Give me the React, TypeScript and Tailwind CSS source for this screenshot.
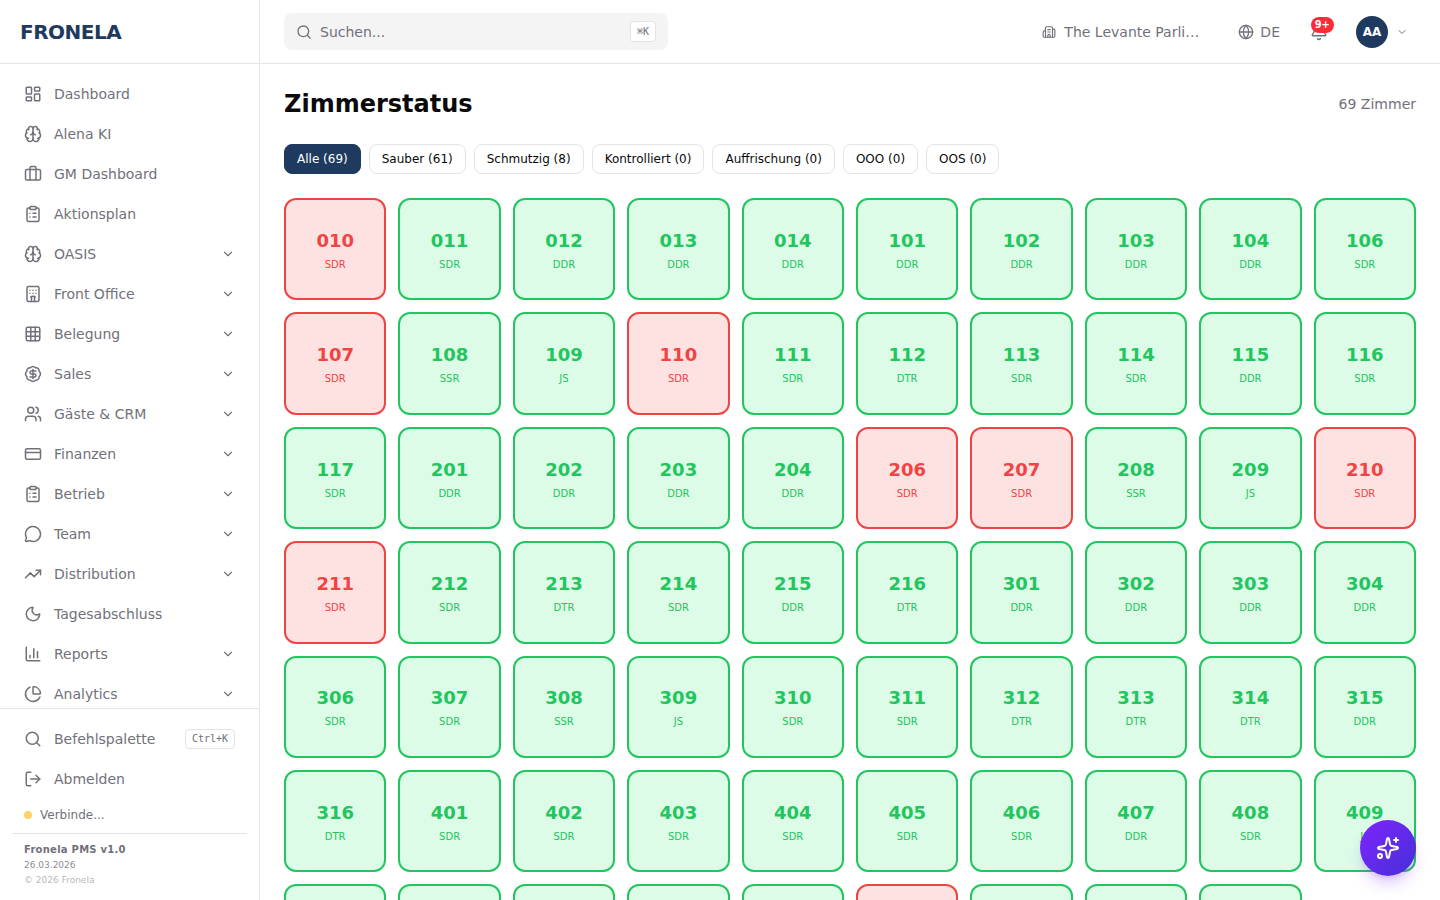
import { useState } from "react";
import {
  BadgeDollarSign,
  Bell,
  Brain,
  Briefcase,
  Building2,
  ChartColumn,
  ChartPie,
  ChevronDown,
  ClipboardList,
  CreditCard,
  Globe,
  Grid3x3,
  Hotel,
  LayoutDashboard,
  LogOut,
  LucideIcon,
  MessageCircle,
  Moon,
  Search,
  Sparkles,
  TrendingUp,
  Users,
} from "lucide-react";
import clsx from "clsx";

interface NavEntry {
  label: string;
  icon: LucideIcon;
  expandable?: boolean;
}

const NAV_ENTRIES: NavEntry[] = [
  { label: "Dashboard", icon: LayoutDashboard },
  { label: "Alena KI", icon: Brain },
  { label: "GM Dashboard", icon: Briefcase },
  { label: "Aktionsplan", icon: ClipboardList },
  { label: "OASIS", icon: Brain, expandable: true },
  { label: "Front Office", icon: Hotel, expandable: true },
  { label: "Belegung", icon: Grid3x3, expandable: true },
  { label: "Sales", icon: BadgeDollarSign, expandable: true },
  { label: "Gäste & CRM", icon: Users, expandable: true },
  { label: "Finanzen", icon: CreditCard, expandable: true },
  { label: "Betrieb", icon: ClipboardList, expandable: true },
  { label: "Team", icon: MessageCircle, expandable: true },
  { label: "Distribution", icon: TrendingUp, expandable: true },
  { label: "Tagesabschluss", icon: Moon },
  { label: "Reports", icon: ChartColumn, expandable: true },
  { label: "Analytics", icon: ChartPie, expandable: true },
];

// one string per row, "number type"
const ROOMS = [
  "010 SDR,011 SDR,012 DDR,013 DDR,014 DDR,101 DDR,102 DDR,103 DDR,104 DDR,106 SDR",
  "107 SDR,108 SSR,109 JS,110 SDR,111 SDR,112 DTR,113 SDR,114 SDR,115 DDR,116 SDR",
  "117 SDR,201 DDR,202 DDR,203 DDR,204 DDR,206 SDR,207 SDR,208 SSR,209 JS,210 SDR",
  "211 SDR,212 SDR,213 DTR,214 SDR,215 DDR,216 DTR,301 DDR,302 DDR,303 DDR,304 DDR",
  "306 SDR,307 SDR,308 SSR,309 JS,310 SDR,311 SDR,312 DTR,313 DTR,314 DTR,315 DDR",
  "316 DTR,401 SDR,402 SDR,403 SDR,404 SDR,405 SDR,406 SDR,407 DDR,408 SDR,409 JS",
  "410 SDR,411 SDR,412 DTR,413 DTR,414 DTR,415 DDR,416 DTR,501 SDR,502 SDR",
].flatMap((row) =>
  row.split(",").map((room) => {
    const [number, type] = room.split(" ");
    return { number, type };
  }),
);

const DIRTY = ["010", "107", "110", "206", "207", "210", "211", "415"];

const FILTERS = [
  { key: "all", label: "Alle", count: 69 },
  { key: "clean", label: "Sauber", count: 61 },
  { key: "dirty", label: "Schmutzig", count: 8 },
  { key: "inspected", label: "Kontrolliert", count: 0 },
  { key: "refresh", label: "Auffrischung", count: 0 },
  { key: "ooo", label: "OOO", count: 0 },
  { key: "oos", label: "OOS", count: 0 },
];

function NavLink({ label, icon: Icon, expandable }: NavEntry) {
  return (
    <a
      href="#"
      className="flex h-9 shrink-0 items-center gap-3 rounded-lg px-3 text-sm hover:bg-zinc-100"
    >
      <Icon size={18} />
      <span className="flex-1">{label}</span>
      {expandable && <ChevronDown size={14} />}
    </a>
  );
}

function Sidebar() {
  return (
    <aside className="flex w-[260px] shrink-0 flex-col border-r border-[#e4e4e7] text-[#71717a]">
      <div className="flex h-16 shrink-0 items-center border-b border-[#e4e4e7] px-5">
        <span className="text-xl font-bold tracking-tight text-[#1e3a5f]">
          FRONELA
        </span>
      </div>
      <nav className="flex min-h-0 flex-1 flex-col gap-1 overflow-y-auto p-3">
        {NAV_ENTRIES.map((entry) => (
          <NavLink key={entry.label} {...entry} />
        ))}
      </nav>
      <div className="flex shrink-0 flex-col gap-1 border-t border-[#e4e4e7] px-3 pt-3 pb-[13px]">
        <button
          type="button"
          className="flex h-9 items-center gap-3 rounded-lg px-3 text-sm hover:bg-zinc-100"
        >
          <Search size={18} />
          <span className="flex-1 text-left">Befehlspalette</span>
          <kbd className="rounded border border-[#e4e4e7] px-1.5 py-0.5 font-['DejaVu_Sans_Mono',monospace] text-[10px] leading-[14px]">
            Ctrl+K
          </kbd>
        </button>
        <button
          type="button"
          className="flex h-9 items-center gap-3 rounded-lg px-3 text-sm hover:bg-zinc-100"
        >
          <LogOut size={18} />
          Abmelden
        </button>
        <div className="flex items-center gap-2 px-3 py-1.5 text-xs">
          <span className="size-2 rounded-full bg-[#ffd166]" />
          Verbinde...
        </div>
        <div className="flex flex-col gap-0.5 border-t border-[#e4e4e7] px-3 pt-2">
          <p className="text-[10px] leading-[15px] font-bold tracking-wide">
            Fronela PMS v1.0
          </p>
          <p className="text-[9px] leading-[13px] opacity-80">26.03.2026</p>
          <p className="text-[9px] leading-[13px] opacity-50">© 2026 Fronela</p>
        </div>
      </div>
    </aside>
  );
}

function Header() {
  return (
    <header className="flex h-16 shrink-0 items-center justify-between border-b border-[#e4e4e7] px-6 text-[#71717a]">
      <label className="flex w-full max-w-sm items-center gap-2 rounded-lg bg-[#f4f4f5] px-3 py-2">
        <Search size={16} className="shrink-0" />
        <input
          type="text"
          aria-label="Suchen"
          placeholder="Suchen..."
          className="h-5 min-w-0 flex-1 bg-transparent text-sm outline-none placeholder:text-[#71717a]"
        />
        <kbd className="rounded border border-[#e4e4e7] bg-white px-1.5 py-0.5 font-['DejaVu_Sans_Mono',monospace] text-[10px] leading-[15px]">
          ⌘K
        </kbd>
      </label>
      <div className="flex items-center gap-3 text-sm">
        <button type="button" className="flex items-center gap-2 px-3 py-2">
          <Building2 size={14} />
          <span className="w-[140px] text-left">The Levante Parli…</span>
        </button>
        <button type="button" className="flex items-center gap-1.5 px-2.5 py-2">
          <Globe size={16} />
          DE
        </button>
        <button
          type="button"
          aria-label="Benachrichtigungen"
          className="relative p-2"
        >
          <Bell size={18} />
          <span className="absolute top-0.5 right-0.5 flex h-4 items-center rounded-full bg-[#fb2c36] px-1 text-[10px] leading-[15px] font-bold text-white">
            9+
          </span>
        </button>
        <button
          type="button"
          aria-label="Benutzermenü"
          className="flex items-center gap-2 px-2"
        >
          <span className="flex size-8 items-center justify-center rounded-full bg-[#1e3a5f] text-xs font-bold text-white">
            AA
          </span>
          <ChevronDown size={12} />
        </button>
      </div>
    </header>
  );
}

interface RoomCardProps {
  number: string;
  type: string;
}

function RoomCard({ number, type }: RoomCardProps) {
  return (
    <button
      type="button"
      className={clsx(
        "flex aspect-square flex-col items-center justify-center rounded-xl border-2",
        DIRTY.includes(number)
          ? "border-[#ef4444] bg-[#fee2e2] text-[#ef4444]"
          : "border-[#22c55e] bg-[#dcfce7] text-[#22c55e]",
      )}
    >
      <span className="text-lg font-bold">{number}</span>
      <span className="mt-0.5 text-[10px] leading-[15px]">{type}</span>
    </button>
  );
}

function App() {
  const [filter, setFilter] = useState("all");

  const rooms = ROOMS.filter(({ number }) => {
    if (filter === "all") return true;
    if (filter === "dirty") return DIRTY.includes(number);
    return filter === "clean" && !DIRTY.includes(number);
  });

  return (
    <div className="flex h-screen bg-white font-['DejaVu_Sans',sans-serif] text-[#0a0a0a]">
      <Sidebar />
      <div className="flex min-w-0 flex-1 flex-col">
        <Header />
        <main className="min-h-0 flex-1 overflow-y-auto p-6">
          <div className="flex items-center justify-between">
            <h1 className="text-2xl font-bold">Zimmerstatus</h1>
            <span className="text-sm text-[#71717a]">{rooms.length} Zimmer</span>
          </div>
          <div className="mt-6 flex flex-wrap gap-2">
            {FILTERS.map(({ key, label, count }) => (
              <button
                key={key}
                type="button"
                onClick={() => setFilter(key)}
                className={clsx(
                  "rounded-lg border px-3 py-1.5 text-xs",
                  key === filter
                    ? "border-[#1e3a5f] bg-[#1e3a5f] text-white"
                    : "border-[#e4e4e7] bg-white",
                )}
              >
                {label} ({count})
              </button>
            ))}
          </div>
          <div className="mt-6 grid grid-cols-10 gap-3">
            {rooms.map((room) => (
              <RoomCard key={room.number} {...room} />
            ))}
          </div>
        </main>
      </div>
      <button
        type="button"
        aria-label="Assistent"
        className="fixed right-6 bottom-6 flex size-14 items-center justify-center rounded-full bg-linear-to-br from-violet-600 to-indigo-700 text-white shadow-lg shadow-violet-600/25"
      >
        <Sparkles size={24} />
      </button>
    </div>
  );
}

export default App;
